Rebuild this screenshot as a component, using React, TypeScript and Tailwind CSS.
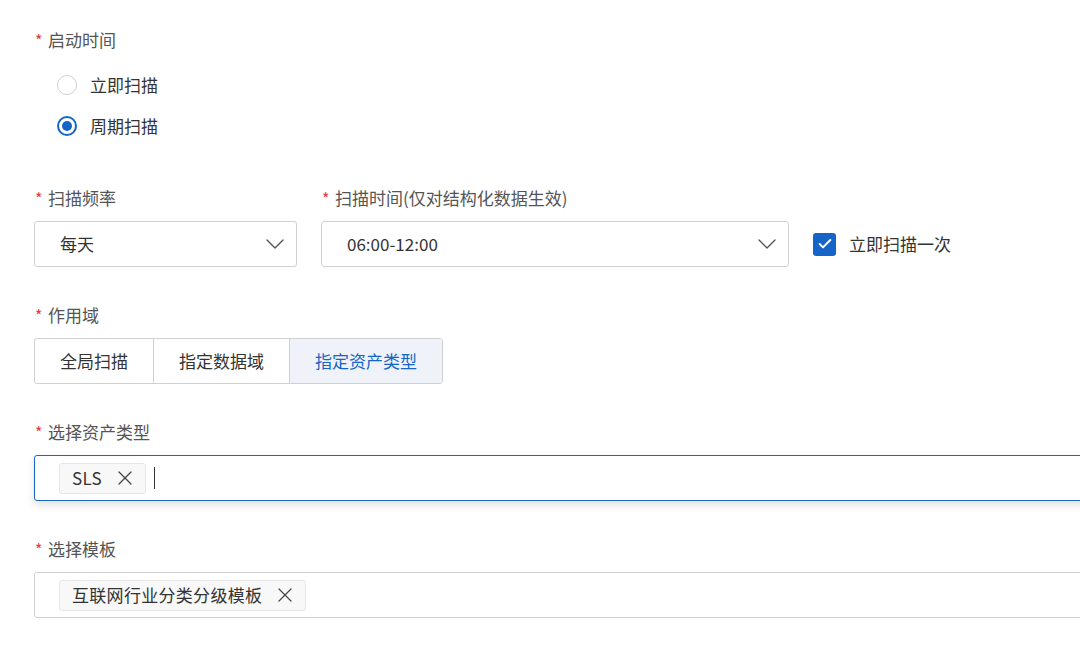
import React from "react";
import { ChevronDown, X, Check } from "lucide-react";

function Label({ text }: { text: string }) {
  return (
    <div className="flex h-6 items-center text-[17px] leading-6 text-[#555]">
      <span className="w-[14px] pl-[1px] text-[16px] leading-none text-[#e23b3b]">*</span>
      {text}
    </div>
  );
}

function Select({ value, width }: { value: string; width: string }) {
  return (
    <div
      className={`flex h-[46px] items-center justify-between rounded-[3px] border border-[#d0d0d0] bg-white pl-[25px] pr-[5px] text-[17px] text-[#333] ${width}`}
    >
      <span>{value}</span>
      <ChevronDown size={32} strokeWidth={1} className="text-[#555]" />
    </div>
  );
}

function Radio({ label, checked }: { label: string; checked?: boolean }) {
  return (
    <div className="flex h-[41px] items-center gap-[13px] pl-[23px]">
      {checked ? (
        <span className="flex h-5 w-5 items-center justify-center rounded-full border-2 border-[#1565c8] bg-white">
          <span className="h-[10px] w-[10px] rounded-full bg-[#1565c8]" />
        </span>
      ) : (
        <span className="h-5 w-5 rounded-full border border-[#cfcfcf] bg-white" />
      )}
      <span className="text-[17px] text-[#333]">{label}</span>
    </div>
  );
}

function Tag({ text }: { text: string }) {
  return (
    <div className="flex h-[31px] items-center gap-[11px] rounded-[3px] border border-[#e6e6e6] bg-[#f8f8f8] pl-[12px] pr-[8px] text-[17px] tracking-[0.3px] text-[#333]">
      <span>{text}</span>
      <X size={24} strokeWidth={1.2} className="text-[#444]" />
    </div>
  );
}

export default function App() {
  return (
    <div className="h-[655px] w-[1080px] overflow-hidden bg-white pl-[34px] pt-[28px] font-[family-name:'Noto_Sans_CJK_SC',sans-serif]">
      <Label text="启动时间" />
      <div className="mt-[12px]">
        <Radio label="立即扫描" />
        <Radio label="周期扫描" checked />
      </div>

      <div className="mt-[40px] flex gap-[24px]">
        <div>
          <Label text="扫描频率" />
          <div className="mt-[11px]">
            <Select value="每天" width="w-[263px]" />
          </div>
        </div>
        <div>
          <Label text="扫描时间(仅对结构化数据生效)" />
          <div className="mt-[11px] flex items-center gap-[24px]">
            <Select value="06:00-12:00" width="w-[468px]" />
            <div className="flex items-center gap-[13px]">
              <span className="flex h-[23px] w-[23px] items-center justify-center rounded-[3px] bg-[#1565c8]">
                <Check size={16} strokeWidth={3} className="text-white" />
              </span>
              <span className="text-[17px] text-[#333]">立即扫描一次</span>
            </div>
          </div>
        </div>
      </div>

      <div className="mt-[36px]">
        <Label text="作用域" />
        <div className="mt-[11px] flex h-[46px] w-fit rounded-[3px] border border-[#d0d0d0] text-[17px]">
          <div className="flex items-center border-r border-[#d0d0d0] px-[25px] text-[#333]">全局扫描</div>
          <div className="flex items-center border-r border-[#d0d0d0] px-[25px] text-[#333]">指定数据域</div>
          <div className="flex items-center bg-[#eff3f9] px-[25px] text-[#1565c8]">指定资产类型</div>
        </div>
      </div>

      <div className="mt-[36px]">
        <Label text="选择资产类型" />
        <div className="mt-[11px] flex h-[46px] w-[1100px] items-center gap-[8px] rounded-[3px] border-[1.5px] border-[#1a66c9] bg-white pl-[24px] shadow-[0_4px_8px_rgba(0,0,0,0.12)]">
          <Tag text="SLS" />
          <span className="h-[22px] w-[1.5px] bg-[#333]" />
        </div>
      </div>

      <div className="mt-[36px]">
        <Label text="选择模板" />
        <div className="mt-[11px] flex h-[46px] w-[1100px] items-center rounded-[3px] border border-[#d0d0d0] bg-white pl-[24px]">
          <Tag text="互联网行业分类分级模板" />
        </div>
      </div>
    </div>
  );
}
